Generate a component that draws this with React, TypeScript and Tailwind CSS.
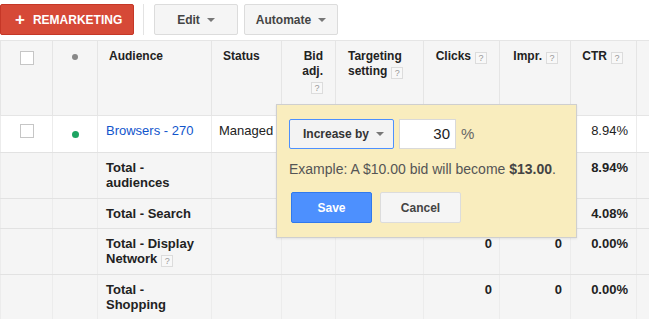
import React from 'react';

const Help = () => (
  <span className="inline-block w-[12px] h-[12px] border border-[#dcdcdc] bg-[#f8f8f8] text-[9px] leading-[10px] text-center text-[#999] font-normal align-[-1px] ml-[4px]">
    ?
  </span>
);

const Caret = ({ color = '#777' }: { color?: string }) => (
  <span
    className="inline-block w-0 h-0 border-x-[4px] border-x-transparent border-t-[4px] ml-[7px] align-middle"
    style={{ borderTopColor: color }}
  />
);

const Checkbox = () => <span className="block w-[14px] h-[14px] border border-[#c6c6c6] bg-white mx-auto" />;

type Row = {
  kind: 'item' | 'total';
  label: React.ReactNode;
  status?: string;
  clicks?: string;
  impr?: string;
  ctr: string;
  h: string;
};

const rows: Row[] = [
  { kind: 'item', label: 'Browsers - 270', status: 'Managed', ctr: '8.94%', h: 'h-[37px]' },
  { kind: 'total', label: <>Total -<br />audiences</>, ctr: '8.94%', h: 'h-[46px]' },
  { kind: 'total', label: 'Total - Search', ctr: '4.08%', h: 'h-[30px]' },
  { kind: 'total', label: <>Total - Display<br />Network<Help /></>, clicks: '0', impr: '0', ctr: '0.00%', h: 'h-[46px]' },
  { kind: 'total', label: <>Total -<br />Shopping</>, clicks: '0', impr: '0', ctr: '0.00%', h: 'h-[46px]' },
];

export default function App() {
  const th = 'border border-[#e5e5e5] align-top pt-[8px] text-[12px] leading-[15px] font-bold text-[#222]';
  const td = 'border-x border-x-[#ececec] border-y border-y-[#e2e2e2] align-top pt-[7px] text-[13px] leading-[15px] text-[#222]';

  return (
    <div className="relative w-[649px] h-[319px] overflow-hidden bg-white" style={{ fontFamily: '"Liberation Sans", Arial, sans-serif' }}>
      {/* Toolbar */}
      <div className="flex items-center h-[40px] pb-[1px]">
        <button className="h-[31px] w-[134px] rounded-[2px] bg-[#d64937] border border-[#c53727] text-white text-[12px] font-bold flex items-center pl-[14px]">
          <span className="text-[17px] leading-none mr-[8px] font-bold">+</span>
          REMARKETING
        </button>
        <span className="w-px h-[31px] bg-[#e3e3e3] ml-[9px] mr-[10px]" />
        <button className="h-[31px] w-[84px] rounded-[2px] bg-[#f5f5f5] border border-[#dcdcdc] text-[#444] text-[12px] font-bold flex items-center justify-center">
          Edit<Caret />
        </button>
        <button className="h-[31px] w-[94px] ml-[6px] rounded-[2px] bg-[#f5f5f5] border border-[#dcdcdc] text-[#444] text-[12px] font-bold flex items-center justify-center">
          Automate<Caret />
        </button>
      </div>

      {/* Table */}
      <table className="table-fixed border-collapse w-[690px]">
        <colgroup>
          <col className="w-[52px]" />
          <col className="w-[45px]" />
          <col className="w-[114px]" />
          <col className="w-[70px]" />
          <col className="w-[54px]" />
          <col className="w-[88px]" />
          <col className="w-[76px]" />
          <col className="w-[71px]" />
          <col className="w-[66px]" />
          <col className="w-[54px]" />
        </colgroup>
        <thead>
          <tr className="h-[75px] bg-[#f5f5f5]">
            <th className={`${th} pt-[10px]`}><Checkbox /></th>
            <th className={`${th} pt-[13px]`}>
              <span className="block w-[6px] h-[6px] rounded-full bg-[#888] mx-auto" />
            </th>
            <th className={`${th} text-left pl-[11px]`}>Audience</th>
            <th className={`${th} text-left pl-[11px]`}>Status</th>
            <th className={`${th} text-right pr-[12px]`}>
              Bid<br />adj.<br /><Help />
            </th>
            <th className={`${th} text-left pl-[12px]`}>
              Targeting<br />setting<Help />
            </th>
            <th className={`${th} text-right pr-[12px]`}>Clicks<Help /></th>
            <th className={`${th} text-right pr-[12px]`}>Impr.<Help /></th>
            <th className={`${th} text-right pr-[13px]`}>CTR<Help /></th>
            <th className={th}></th>
          </tr>
        </thead>
        <tbody>
          {rows.map((r, i) => {
            const bold = r.kind === 'total' ? 'font-bold' : '';
            return (
              <tr key={i} className={`${r.h} ${r.kind === 'item' ? 'bg-white' : 'bg-[#f5f5f5]'}`}>
                <td className={`${td} pt-[8px]`}>{r.kind === 'item' && <Checkbox />}</td>
                <td className={`${td} pt-[15px]`}>
                  {r.kind === 'item' && <span className="block w-[7px] h-[7px] rounded-full bg-[#1da462] mx-auto" />}
                </td>
                <td className={`${td} pl-[8px] ${bold} ${r.kind === 'item' ? 'text-[#1155cc]' : ''}`}>{r.label}</td>
                <td className={`${td} pl-[7px]`}>{r.status}</td>
                <td className={td}></td>
                <td className={td}></td>
                <td className={`${td} text-right pr-[7px] ${bold}`}>{r.clicks}</td>
                <td className={`${td} text-right pr-[8px] ${bold}`}>{r.impr}</td>
                <td className={`${td} text-right pr-[8px] ${bold}`}>{r.ctr}</td>
                <td className={td}></td>
              </tr>
            );
          })}
        </tbody>
      </table>

      {/* Bid adjustment popup */}
      <div className="absolute left-[276px] top-[104px] w-[301px] h-[134px] bg-[#f9edbe] border border-[#cfcfcf] shadow-[0_1px_2px_rgba(0,0,0,0.08)] pl-[12px] pt-[14px]">
        <div className="flex items-center">
          <button className="h-[30px] w-[105px] rounded-[2px] bg-[#f3f3f3] border border-[#4d90fe] text-[#333] text-[12px] font-bold flex items-center pl-[13px]">
            Increase by<Caret />
          </button>
          <div className="h-[30px] w-[57px] ml-[5px] bg-white border border-[#d9d9d9] text-[15px] text-[#222] text-right pr-[5px] leading-[28px]">
            30
          </div>
          <span className="ml-[5px] text-[15px] text-[#666]">%</span>
        </div>
        <p className="mt-[11px] text-[14px] leading-[18px] text-[#555]">
          Example: A $10.00 bid will become <b className="text-[#444]">$13.00</b>.
        </p>
        <div className="flex mt-[14px] ml-[2px]">
          <button className="h-[31px] w-[81px] rounded-[2px] bg-[#4d90fe] border border-[#3079ed] text-white text-[12px] font-bold">
            Save
          </button>
          <button className="h-[31px] w-[81px] ml-[8px] rounded-[2px] bg-[#f5f5f5] border border-[#dcdcdc] text-[#444] text-[12px] font-bold">
            Cancel
          </button>
        </div>
      </div>
    </div>
  );
}
